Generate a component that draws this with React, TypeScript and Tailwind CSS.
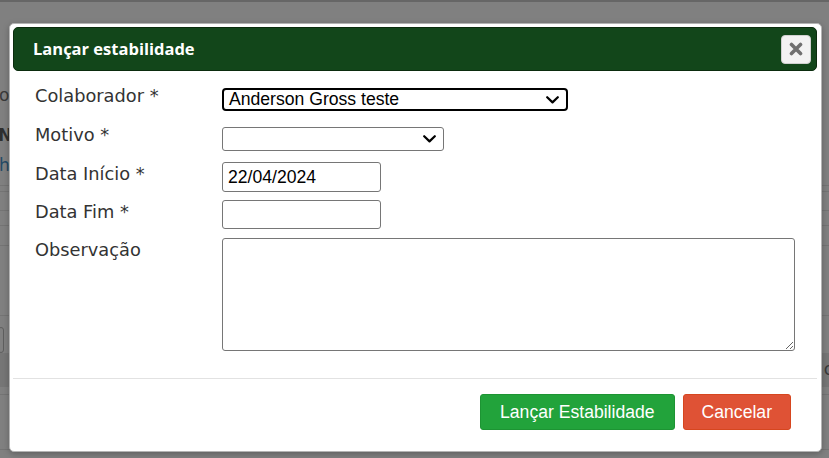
import React from "react";

const labelCls =
  "w-[187px] shrink-0 text-[17.8px] leading-[20px] text-[#333] [font-family:'DejaVu_Sans',Verdana,sans-serif]";
const fieldFont = "[font-family:'Liberation_Sans',Arial,sans-serif] text-[17.6px] text-black";

function Chevron() {
  return (
    <svg width="13" height="8" viewBox="0 0 13 8" className="pointer-events-none">
      <path d="M1.2 1.2 L6.5 6.4 L11.8 1.2" fill="none" stroke="#000" strokeWidth="2.2" strokeLinecap="round" strokeLinejoin="round" />
    </svg>
  );
}

function CloseIcon() {
  return (
    <svg width="14" height="14" viewBox="0 0 14 14">
      <path d="M2.5 2.5 L11.5 11.5 M11.5 2.5 L2.5 11.5" stroke="#6f6f6f" strokeWidth="3.6" strokeLinecap="round" />
    </svg>
  );
}

export default function App() {
  return (
    <div className="relative w-[829px] h-[458px] overflow-hidden bg-[#808080] [font-family:'Liberation_Sans',Arial,sans-serif]">
      {/* page behind the dimmed overlay */}
      <div className="flex flex-col">
        <div className="h-[2px] bg-[#666]" />
        <div className="h-[82px]" />
        <div className="h-[22px] -ml-[1px] text-[17px] leading-[22px] text-[#3a3a3a] [font-family:'DejaVu_Sans',sans-serif]">os</div>
        <div className="h-[18px]" />
        <div className="h-[22px] -ml-[2px] text-[17px] leading-[22px] font-bold text-[#2f2f2f] [font-family:'DejaVu_Sans',sans-serif]">N</div>
        <div className="h-[8px]" />
        <div className="h-[22px] -ml-[1px] text-[17px] leading-[22px] text-[#254a66] [font-family:'DejaVu_Sans',sans-serif]">h</div>
        <div className="h-[10px] border-b border-[#747474]" />
        <div className="h-[6px] border-b border-[#747474]" />
        <div className="h-[19px] border-b border-[#747474]" />
        <div className="h-[15px] border-b border-[#747474]" />
        <div className="h-[20px] border-b border-[#747474]" />
        <div className="h-[70px] border-b border-[#747474]" />
        <div className="h-[11px]" />
        <div className="h-[26px] w-[6px] -ml-[2px] rounded-[4px] border border-[#5e5e5e]" />
        <div className="h-[34px] bg-[#767676] flex justify-end items-center">
          <span className="text-[17px] text-[#3a3a3a] mr-[-4px] [font-family:'DejaVu_Sans',sans-serif]">c</span>
        </div>
        <div className="h-[8px] border-b border-[#747474]" />
        <div className="h-[55px] border-b border-[#747474]" />
      </div>

      {/* dialog */}
      <div className="absolute left-[9px] top-[23px] w-[813px] h-[429px] bg-white rounded-[5px] border border-[#b4b4b4] shadow-[0_2px_6px_rgba(0,0,0,0.25)] pt-[3px] pl-[3px] pr-[4px] flex flex-col">
        <div className="h-[44px] bg-[#12461a] border border-[#0b2c0e] rounded-[5px] flex items-center justify-between pl-[19px] pr-[5px]">
          <span className="text-white font-bold text-[16.5px] [font-family:'Open_Sans',sans-serif]">Lançar estabilidade</span>
          <button className="w-[30px] h-[29px] rounded-[4px] bg-[#f2f2f2] border border-[#d0d0d0] flex items-center justify-center">
            <CloseIcon />
          </button>
        </div>

        <div className="pl-[22px] pt-[17px] flex flex-col">
          <div className="h-[39px] flex items-start">
            <label className={`${labelCls} -mt-[2px]`}>Colaborador *</label>
            <div className="relative w-[346px] h-[23px] border-2 border-black rounded-[4px] flex items-center justify-between pl-[5px] pr-[7px]">
              <span className={fieldFont}>Anderson Gross teste</span>
              <Chevron />
            </div>
          </div>
          <div className="h-[35px] flex items-start">
            <label className={`${labelCls} -mt-[2px]`}>Motivo *</label>
            <div className="w-[222px] h-[24px] border border-[#767676] rounded-[3px] flex items-center justify-end pr-[7px]">
              <Chevron />
            </div>
          </div>
          <div className="h-[38px] flex items-start">
            <label className={`${labelCls} mt-[2px]`}>Data Início *</label>
            <div className="w-[159px] h-[30px] border border-[#767676] rounded-[3px] flex items-center pl-[5px]">
              <span className={fieldFont}>22/04/2024</span>
            </div>
          </div>
          <div className="h-[38px] flex items-start">
            <label className={`${labelCls} mt-[2px]`}>Data Fim *</label>
            <div className="w-[159px] h-[29px] border border-[#767676] rounded-[3px]" />
          </div>
          <div className="h-[113px] flex items-start">
            <label className={`${labelCls} mt-[2px]`}>Observação</label>
            <textarea className="w-[573px] h-[113px] border border-[#767676] rounded-[3px] outline-none" />
          </div>
        </div>

        <div className="mt-[27px] h-px bg-[#e2e2e2]" />

        <div className="pt-[15px] flex justify-end gap-[8px] pr-[26px]">
          <button className="h-[36px] px-[19px] rounded-[3px] bg-[#22a33b] border border-[#1d9433] text-white text-[17.6px] [font-family:'Liberation_Sans',Arial,sans-serif]">
            Lançar Estabilidade
          </button>
          <button className="h-[36px] px-[18px] rounded-[3px] bg-[#df5235] border border-[#d6461f] text-white text-[17.6px] [font-family:'Liberation_Sans',Arial,sans-serif]">
            Cancelar
          </button>
        </div>
      </div>
    </div>
  );
}
